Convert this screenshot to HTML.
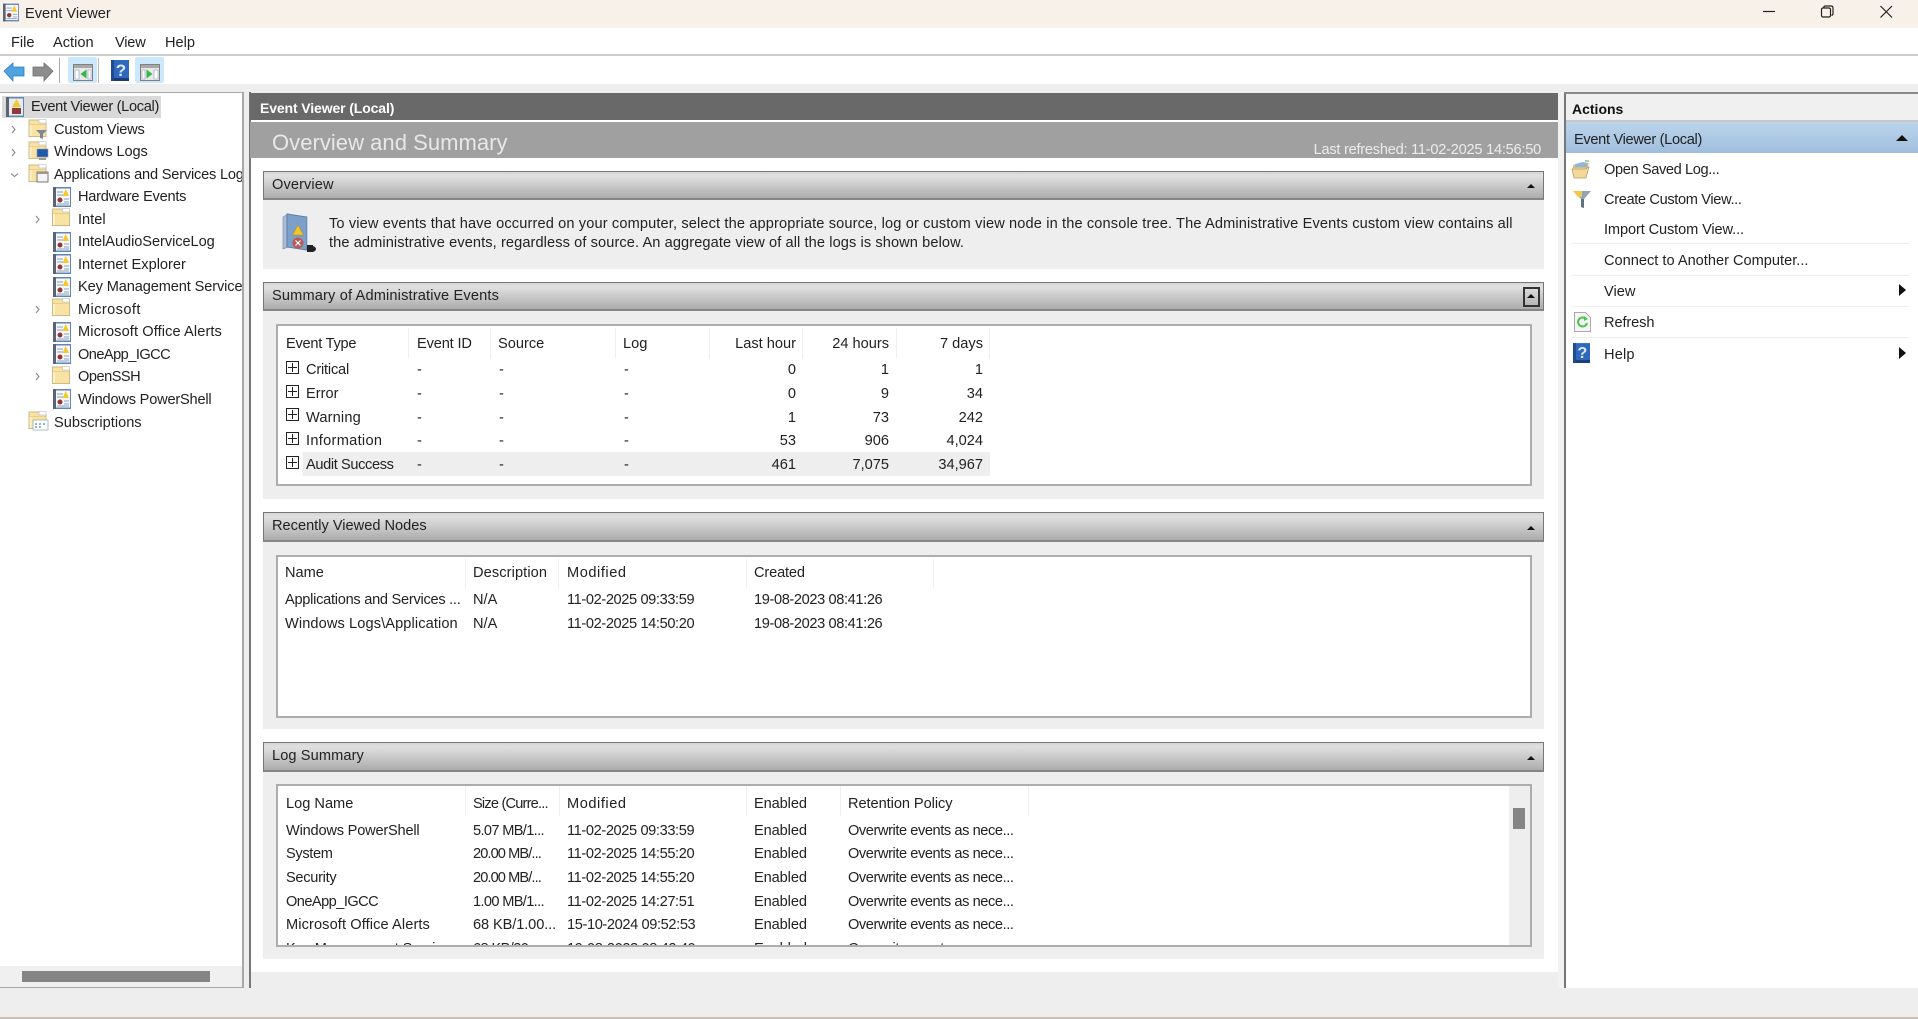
<!DOCTYPE html>
<html><head><meta charset="utf-8"><title>Event Viewer</title>
<style>
html,body{margin:0;padding:0;width:1918px;height:1019px;overflow:hidden;background:#eee;font-family:"Liberation Sans",sans-serif;font-size:14.6px;color:#222}
.a{position:absolute}
.t{position:absolute;line-height:20px;height:20px;white-space:nowrap;margin-top:1px}
.r{text-align:right}
.d{letter-spacing:-.38px}
.o{letter-spacing:-.42px}
.sh{position:absolute;left:263px;width:1279px;box-sizing:content-box;border:1px solid #777;border-bottom:2px solid #858585;background:linear-gradient(#d6d6d6,#e0e0e0 14%,#acacac)}
.sb{position:absolute;left:263px;width:1281px;background:#eee}
.lb{position:absolute;left:276px;width:1252px;border:2px solid #adadad;background:#fff;box-sizing:content-box}
.sep{position:absolute;width:1px;background:#f0f0f0}
.h{position:absolute;left:1572px;width:337px;height:1px;background:#eee}
.tri{position:absolute;width:0;height:0;border-left:4px solid transparent;border-right:4px solid transparent;border-bottom:4px solid #111}
.ar{position:absolute;width:0;height:0;border-top:6px solid transparent;border-bottom:6px solid transparent;border-left:7px solid #111}
svg.i{position:absolute;overflow:visible}
.pb{position:absolute;left:286px;width:11px;height:11px;border:1.5px solid #222;background:#fff}
.pb:before{content:"";position:absolute;left:1px;right:1px;top:5px;height:1px;background:#222}
.pb:after{content:"";position:absolute;top:1px;bottom:1px;left:5px;width:1px;background:#222}
</style></head><body>
<svg width="0" height="0" style="position:absolute"><defs>
<symbol id="log" viewBox="0 0 18 20"><rect x="0" y="0" width="18" height="20" fill="#5f86b8"/><rect x="0" y="0" width="3" height="20" fill="#5a6475"/><rect x="3" y="1.500" width="14" height="17" fill="#f7f7f7"/><path d="M4 5h6M4 8h6M11 12h5M11 15h5M4 17h12" stroke="#86a2c6" stroke-width="1"/><path d="M9.500 9l3.200-7 3.300 7z" fill="#f4c92e"/><circle cx="7" cy="13" r="2.500" fill="#8f3a36"/></symbol>
<symbol id="fol" viewBox="0 0 18 18"><path d="M.5 1h10l1 1.500h6v15H.5z" fill="#f8e3a4" stroke="#cfb987"/><rect x="10.500" y=".5" width="7" height="3.500" fill="#fff" stroke="#bfc6cf" stroke-width=".7"/><path d="M1 5h16v.8H1z" fill="#e9c97f"/><path d="M1 6h2v11H1z" fill="#fdf1c9"/></symbol>
<symbol id="help" viewBox="0 0 18 21"><rect width="18" height="21" fill="#2f69bd"/><rect width="18" height="3" y="18" fill="#1c3c78"/><rect x="0" width="3" height="21" fill="#1f4a8f"/><text x="10" y="16" text-anchor="middle" font-family="Liberation Sans,sans-serif" font-weight="700" font-size="17" fill="#dfe6f2">?</text></symbol>
<symbol id="pane" viewBox="0 0 20 17"><rect x=".5" y=".5" width="19" height="16" fill="#e9e9e9" stroke="#808080"/><rect x="1" y="1" width="18" height="3" fill="#a8a8a8"/></symbol>
</defs></svg>

<!-- title bar -->
<div class="a" style="left:0;top:0;width:1918px;height:28px;background:#f8f1e9"></div>
<svg class="i" style="left:3px;top:3px" width="16" height="19"><use href="#log" width="16" height="19"/></svg>
<div class="t" style="left:25px;top:3px">Event Viewer</div>
<svg class="i" style="left:1760px;top:4px" width="140" height="16" fill="none" stroke="#222" stroke-width="1.2"><path d="M3 7.500h12"/><rect x="61.500" y="4" width="9" height="9" rx="1.500"/><path d="M63.500 3.500q.5-1.500 2-1.500h5.500q2 0 2 2v5.500q0 1.500-1.500 2"/><path d="M120.500 2l11.500 11.500M132 2l-11.500 11.500"/></svg>

<!-- menu -->
<div class="a" style="left:0;top:28px;width:1918px;height:27px;background:#fff"></div>
<div class="a" style="left:0;top:54px;width:1918px;height:2px;background:#cfcfcf"></div>
<div class="t" style="left:11px;top:32px">File</div>
<div class="t" style="left:53px;top:32px">Action</div>
<div class="t" style="left:115px;top:32px;letter-spacing:-.2px">View</div>
<div class="t" style="left:165px;top:32px">Help</div>

<!-- toolbar -->
<div class="a" style="left:0;top:56px;width:1918px;height:28px;background:#fff"></div>
<svg class="i" style="left:4px;top:62px" width="52" height="20"><path d="M0 9l9-8v4h11v9H9v5z" fill="#4ea3e0" stroke="#2f7fc0" stroke-width=".8"/><path d="M49 9l-9-8v4H29v9h11v5z" fill="#8c8c8c" stroke="#6f6f6f" stroke-width=".8"/></svg>
<div class="a" style="left:59px;top:58px;width:1px;height:25px;background:#aaa"></div>
<div class="a" style="left:68px;top:57px;width:29px;height:26px;background:#cce8ff;border-radius:2px"></div>
<div class="a" style="left:98px;top:58px;width:1px;height:25px;background:#bbb"></div>
<div class="a" style="left:135px;top:57px;width:29px;height:26px;background:#cce8ff;border-radius:2px"></div>
<svg class="i" style="left:73px;top:64px" width="20" height="17"><use href="#pane" width="20" height="17"/><path d="M2 6h4v9H2z" fill="#fff" stroke="#8ba0b8" stroke-width=".6"/><path d="M15 6h3v9h-3z" fill="#fff" stroke="#8ba0b8" stroke-width=".6"/><path d="M13.500 5.500l-6 4.500 6 4.500z" fill="#3ab54a"/></svg>
<svg class="i" style="left:111px;top:60px" width="18" height="21"><use href="#help" width="18" height="21"/></svg>
<svg class="i" style="left:140px;top:64px" width="20" height="17"><use href="#pane" width="20" height="17"/><path d="M2 6h3v9H2z" fill="#fff" stroke="#8ba0b8" stroke-width=".6"/><path d="M14 6h4v9h-4z" fill="#fff" stroke="#8ba0b8" stroke-width=".6"/><path d="M6.500 5.500l6 4.500-6 4.500z" fill="#3ab54a"/></svg>

<!-- tree -->
<div class="a" style="left:0;top:92px;width:242px;height:895px;background:#fff;border:1px solid #a8a8a8;border-left:0;overflow:hidden">
<div class="a" style="left:2px;top:3px;width:159px;height:22px;background:#d9d9d9"></div>
</div>
<div class="a" style="left:243px;top:92px;width:1px;height:896px;background:#a8a8a8"></div>
<div class="a" style="left:0;top:966px;width:242px;height:21px;background:#f0f0f0"></div>
<div class="a" style="left:22px;top:971px;width:188px;height:11px;background:#858585"></div>
<div class="a" style="left:0;top:92px;width:242px;height:440px;overflow:hidden">
<div class="t" style="left:31px;top:4px;letter-spacing:-.32px">Event Viewer (Local)</div>
<div class="t" style="left:54px;top:27px;letter-spacing:-.2px">Custom Views</div>
<div class="t" style="left:54px;top:49px;letter-spacing:-.1px">Windows Logs</div>
<div class="t" style="left:54px;top:72px;letter-spacing:-.2px">Applications and Services Logs</div>
<div class="t" style="left:78px;top:94px;letter-spacing:-.25px">Hardware Events</div>
<div class="t" style="left:78px;top:117px">Intel</div>
<div class="t" style="left:78px;top:139px;letter-spacing:-.06px">IntelAudioServiceLog</div>
<div class="t" style="left:78px;top:162px">Internet Explorer</div>
<div class="t" style="left:78px;top:184px;letter-spacing:-.12px">Key Management Service</div>
<div class="t" style="left:78px;top:207px;letter-spacing:.4px">Microsoft</div>
<div class="t" style="left:78px;top:229px;letter-spacing:.1px">Microsoft Office Alerts</div>
<div class="t" style="left:78px;top:252px;letter-spacing:-.55px">OneApp_IGCC</div>
<div class="t" style="left:78px;top:274px;letter-spacing:-.5px">OpenSSH</div>
<div class="t" style="left:78px;top:297px;letter-spacing:-.2px">Windows PowerShell</div>
<div class="t" style="left:54px;top:320px">Subscriptions</div>
</div>
<svg class="i" style="left:6px;top:97px" width="18" height="20"><rect x="0" y="0" width="18" height="20" fill="#5f86b8"/><rect x="0" y="0" width="3" height="20" fill="#5a6475"/><rect x="3" y="1.500" width="14" height="17" fill="#e8ecf0"/><path d="M6 10l4.500-8 4.500 8z" fill="#f4c92e"/><rect x="6" y="11" width="9" height="6" fill="#8f3a36"/></svg>
<svg class="i" style="left:28px;top:119px" width="20" height="20"><use href="#fol" width="19" height="18"/><path d="M8 11h11l-4 4v5l-3-1v-4z" fill="#7e8a9a"/></svg>
<svg class="i" style="left:28px;top:141px" width="20" height="20"><use href="#fol" width="19" height="18"/><rect x="9" y="8" width="11" height="8" fill="#1e5aa8" stroke="#99a" stroke-width=".6"/><rect x="11" y="17" width="7" height="2" fill="#999"/></svg>
<svg class="i" style="left:28px;top:164px" width="20" height="20"><use href="#fol" width="19" height="18"/><rect x="9" y="8" width="11" height="10" fill="#f4f4f4" stroke="#777"/><rect x="9" y="8" width="11" height="2" fill="#999"/></svg>
<svg class="i" style="left:53px;top:187px" width="18" height="20"><use href="#log" width="18" height="20"/></svg>
<svg class="i" style="left:52px;top:208px" width="18" height="18"><use href="#fol" width="18" height="18"/></svg>
<svg class="i" style="left:53px;top:232px" width="18" height="20"><use href="#log" width="18" height="20"/></svg>
<svg class="i" style="left:53px;top:254px" width="18" height="20"><use href="#log" width="18" height="20"/></svg>
<svg class="i" style="left:53px;top:277px" width="18" height="20"><use href="#log" width="18" height="20"/></svg>
<svg class="i" style="left:52px;top:298px" width="18" height="18"><use href="#fol" width="18" height="18"/></svg>
<svg class="i" style="left:53px;top:322px" width="18" height="20"><use href="#log" width="18" height="20"/></svg>
<svg class="i" style="left:53px;top:344px" width="18" height="20"><use href="#log" width="18" height="20"/></svg>
<svg class="i" style="left:52px;top:366px" width="18" height="18"><use href="#fol" width="18" height="18"/></svg>
<svg class="i" style="left:53px;top:389px" width="18" height="20"><use href="#log" width="18" height="20"/></svg>
<svg class="i" style="left:28px;top:411px" width="20" height="20"><use href="#fol" width="19" height="18"/><rect x="5" y="9" width="15" height="10" fill="#fff" stroke="#8aa" stroke-width=".7"/><path d="M7 13h2M11 13h2M15 13h2M7 16h2M11 16h2" stroke="#2a6fb0"/></svg>
<svg class="i" style="left:0;top:120px" width="50" height="300" fill="none" stroke="#888" stroke-width="1.100"><path d="M12 6l3 3.500-3 3.500M12 29l3 3.500-3 3.500M11 53.500l3.500 3 3.500-3"/><path d="M36 96l3 3.500-3 3.500M36 186l3 3.500-3 3.500M36 253l3 3.500-3 3.500"/></svg>

<!-- center -->
<div class="a" style="left:249px;top:92px;width:2px;height:896px;background:#777"></div>
<div class="a" style="left:251px;top:93px;width:1307px;height:879px;background:#fff"></div>
<div class="a" style="left:251px;top:972px;width:1307px;height:15px;background:#eee"></div>
<div class="a" style="left:250px;top:93px;width:1308px;height:27px;background:#696969"></div>
<div class="t" style="left:260px;top:97px;color:#fff;font-weight:700;font-size:14px;letter-spacing:-.12px">Event Viewer (Local)</div>
<div class="a" style="left:250px;top:122px;width:1308px;height:36px;background:#a0a0a0"></div>
<div class="t" style="left:272px;top:132px;color:#e8e8e8;font-size:22px;letter-spacing:.04px">Overview and Summary</div>
<div class="t r" style="right:377px;top:139px;color:#ececec;letter-spacing:-.24px">Last refreshed: 11-02-2025 14:56:50</div>

<!-- overview -->
<div class="sh" style="top:171px;height:26px"></div>
<div class="t" style="left:272px;top:174px;letter-spacing:.1px">Overview</div>
<div class="tri" style="left:1527px;top:184px"></div>
<div class="sb" style="top:200px;height:69px"></div>
<svg class="i" style="left:281px;top:214px" width="36" height="40"><path d="M2 3l5-3v33l-5 2z" fill="#a9bdd6" stroke="#7f93ad" stroke-width=".7"/><path d="M6 0l20 3v33L6 33z" fill="#7da0cb" stroke="#5d7ca6"/><path d="M26 3l1 .5v33l-1-.5z" fill="#c5d2e2"/><path d="M17 11l5.500 10h-11z" fill="#f2c52e" stroke="#a80" stroke-width=".5"/><circle cx="17" cy="29" r="5.500" fill="#b85a55"/><path d="M14.500 26.500l5 5M19.500 26.500l-5 5" stroke="#fff" stroke-width="1.200"/><rect x="26" y="31" width="6" height="7" fill="#222"/><ellipse cx="31" cy="35" rx="4" ry="3" fill="#222"/></svg>
<div class="t" style="left:329px;top:213px;letter-spacing:.13px">To view events that have occurred on your computer, select the appropriate source, log or custom view node in the console tree. The Administrative Events custom view contains all</div>
<div class="t" style="left:329px;top:232px;letter-spacing:.09px">the administrative events, regardless of source. An aggregate view of all the logs is shown below.</div>

<!-- summary -->
<div class="sh" style="top:282px;height:26px"></div>
<div class="t" style="left:272px;top:285px;letter-spacing:.15px">Summary of Administrative Events</div>
<div class="a" style="left:1523px;top:287px;width:13px;height:16px;border:2px solid #333"></div>
<div class="tri" style="left:1527px;top:294px"></div>
<div class="sb" style="top:311px;height:188px"></div>
<div class="lb" style="top:324px;height:158px"></div>
<div class="a" style="left:303px;top:452px;width:687px;height:24px;background:#eee"></div>
<div class="sep" style="left:408px;top:328px;height:30px"></div><div class="sep" style="left:490px;top:328px;height:30px"></div><div class="sep" style="left:615px;top:328px;height:30px"></div><div class="sep" style="left:709px;top:328px;height:30px"></div><div class="sep" style="left:802px;top:328px;height:30px"></div><div class="sep" style="left:896px;top:328px;height:30px"></div><div class="sep" style="left:989px;top:328px;height:30px"></div>
<div class="t" style="left:286px;top:333px;letter-spacing:-.25px">Event Type</div><div class="t" style="left:417px;top:333px;letter-spacing:-.15px">Event ID</div><div class="t" style="left:498px;top:333px">Source</div><div class="t" style="left:623px;top:333px">Log</div><div class="t r" style="right:1122px;top:333px">Last hour</div><div class="t r" style="right:1029px;top:333px">24 hours</div><div class="t r" style="right:935px;top:333px">7 days</div>
<div class="pb" style="top:361px"></div><div class="t" style="left:306px;top:359px;letter-spacing:-.2px">Critical</div><div class="t" style="left:417px;top:359px">-</div><div class="t" style="left:499px;top:359px">-</div><div class="t" style="left:624px;top:359px">-</div><div class="t r" style="right:1122px;top:359px">0</div><div class="t r" style="right:1029px;top:359px">1</div><div class="t r" style="right:935px;top:359px">1</div>
<div class="pb" style="top:385px"></div><div class="t" style="left:306px;top:383px">Error</div><div class="t" style="left:417px;top:383px">-</div><div class="t" style="left:499px;top:383px">-</div><div class="t" style="left:624px;top:383px">-</div><div class="t r" style="right:1122px;top:383px">0</div><div class="t r" style="right:1029px;top:383px">9</div><div class="t r" style="right:935px;top:383px">34</div>
<div class="pb" style="top:408px"></div><div class="t" style="left:306px;top:407px;letter-spacing:.15px">Warning</div><div class="t" style="left:417px;top:407px">-</div><div class="t" style="left:499px;top:407px">-</div><div class="t" style="left:624px;top:407px">-</div><div class="t r" style="right:1122px;top:407px">1</div><div class="t r" style="right:1029px;top:407px">73</div><div class="t r" style="right:935px;top:407px">242</div>
<div class="pb" style="top:432px"></div><div class="t" style="left:306px;top:430px;letter-spacing:.3px">Information</div><div class="t" style="left:417px;top:430px">-</div><div class="t" style="left:499px;top:430px">-</div><div class="t" style="left:624px;top:430px">-</div><div class="t r" style="right:1122px;top:430px">53</div><div class="t r" style="right:1029px;top:430px">906</div><div class="t r" style="right:935px;top:430px">4,024</div>
<div class="pb" style="top:456px"></div><div class="t" style="left:306px;top:454px;letter-spacing:-.38px">Audit Success</div><div class="t" style="left:417px;top:454px">-</div><div class="t" style="left:499px;top:454px">-</div><div class="t" style="left:624px;top:454px">-</div><div class="t r" style="right:1122px;top:454px">461</div><div class="t r" style="right:1029px;top:454px">7,075</div><div class="t r" style="right:935px;top:454px">34,967</div>

<!-- recent -->
<div class="sh" style="top:512px;height:27px"></div>
<div class="t" style="left:272px;top:515px">Recently Viewed Nodes</div>
<div class="tri" style="left:1527px;top:526px"></div>
<div class="sb" style="top:542px;height:187px"></div>
<div class="lb" style="top:555px;height:159px"></div>
<div class="sep" style="left:465px;top:559px;height:30px"></div><div class="sep" style="left:558px;top:559px;height:30px"></div><div class="sep" style="left:746px;top:559px;height:30px"></div><div class="sep" style="left:933px;top:559px;height:30px"></div>
<div class="t" style="left:285px;top:562px">Name</div><div class="t" style="left:473px;top:562px;letter-spacing:.1px">Description</div><div class="t" style="left:567px;top:562px;letter-spacing:.55px">Modified</div><div class="t" style="left:754px;top:562px;letter-spacing:-.15px">Created</div>
<div class="t" style="left:285px;top:589px;letter-spacing:-.27px">Applications and Services ...</div><div class="t" style="left:473px;top:589px">N/A</div><div class="t d" style="left:567px;top:589px">11-02-2025 09:33:59</div><div class="t d" style="left:754px;top:589px">19-08-2023 08:41:26</div>
<div class="t" style="left:285px;top:613px;letter-spacing:.1px">Windows Logs\Application</div><div class="t" style="left:473px;top:613px">N/A</div><div class="t d" style="left:567px;top:613px">11-02-2025 14:50:20</div><div class="t d" style="left:754px;top:613px">19-08-2023 08:41:26</div>

<!-- log summary -->
<div class="sh" style="top:742px;height:27px"></div>
<div class="t" style="left:272px;top:745px;letter-spacing:.1px">Log Summary</div>
<div class="tri" style="left:1527px;top:756px"></div>
<div class="sb" style="top:772px;height:187px"></div>
<div class="lb" style="top:784px;height:159px;overflow:hidden"></div>
<div class="a" style="left:278px;top:786px;width:1252px;height:159px;overflow:hidden">
<div class="a" style="left:1231px;top:0;width:21px;height:159px;background:#eee"></div>
<div class="a" style="left:1235px;top:22px;width:12px;height:21px;background:#858585"></div>
<div class="sep" style="left:187px;top:0;height:30px"></div><div class="sep" style="left:281px;top:0;height:30px"></div><div class="sep" style="left:468px;top:0;height:30px"></div><div class="sep" style="left:562px;top:0;height:30px"></div><div class="sep" style="left:750px;top:0;height:30px"></div>
<div class="t" style="left:8px;top:7px">Log Name</div><div class="t" style="left:195px;top:7px;letter-spacing:-.8px">Size (Curre...</div><div class="t" style="left:289px;top:7px;letter-spacing:.55px">Modified</div><div class="t" style="left:476px;top:7px;letter-spacing:-.1px">Enabled</div><div class="t" style="left:570px;top:7px;letter-spacing:-.06px">Retention Policy</div>
<div class="t" style="left:8px;top:34px;letter-spacing:-.2px">Windows PowerShell</div><div class="t" style="left:195px;top:34px;letter-spacing:-.65px">5.07 MB/1...</div><div class="t d" style="left:289px;top:34px">11-02-2025 09:33:59</div><div class="t" style="left:476px;top:34px;letter-spacing:-.1px">Enabled</div><div class="t o" style="left:570px;top:34px">Overwrite events as nece...</div>
<div class="t" style="left:8px;top:57px;letter-spacing:-.35px">System</div><div class="t" style="left:195px;top:57px;letter-spacing:-.9px">20.00 MB/...</div><div class="t d" style="left:289px;top:57px">11-02-2025 14:55:20</div><div class="t" style="left:476px;top:57px;letter-spacing:-.1px">Enabled</div><div class="t o" style="left:570px;top:57px">Overwrite events as nece...</div>
<div class="t" style="left:8px;top:81px;letter-spacing:-.3px">Security</div><div class="t" style="left:195px;top:81px;letter-spacing:-.9px">20.00 MB/...</div><div class="t d" style="left:289px;top:81px">11-02-2025 14:55:20</div><div class="t" style="left:476px;top:81px;letter-spacing:-.1px">Enabled</div><div class="t o" style="left:570px;top:81px">Overwrite events as nece...</div>
<div class="t" style="left:8px;top:105px;letter-spacing:-.55px">OneApp_IGCC</div><div class="t" style="left:195px;top:105px;letter-spacing:-.65px">1.00 MB/1...</div><div class="t d" style="left:289px;top:105px">11-02-2025 14:27:51</div><div class="t" style="left:476px;top:105px;letter-spacing:-.1px">Enabled</div><div class="t o" style="left:570px;top:105px">Overwrite events as nece...</div>
<div class="t" style="left:8px;top:128px;letter-spacing:.1px">Microsoft Office Alerts</div><div class="t" style="left:195px;top:128px;letter-spacing:-.1px">68 KB/1.00...</div><div class="t d" style="left:289px;top:128px">15-10-2024 09:52:53</div><div class="t" style="left:476px;top:128px;letter-spacing:-.1px">Enabled</div><div class="t o" style="left:570px;top:128px">Overwrite events as nece...</div>
<div class="t" style="left:8px;top:152px;letter-spacing:-.12px">Key Management Service</div><div class="t" style="left:195px;top:152px;letter-spacing:-.6px">68 KB/20...</div><div class="t d" style="left:289px;top:152px">19-08-2023 08:42:40</div><div class="t" style="left:476px;top:152px;letter-spacing:-.1px">Enabled</div><div class="t o" style="left:570px;top:152px">Overwrite events as nece...</div>
</div>

<!-- actions -->
<div class="a" style="left:1558px;top:92px;width:6px;height:896px;background:#f2f2f2"></div>
<div class="a" style="left:1564px;top:92px;width:2px;height:896px;background:#777"></div>
<div class="a" style="left:1564px;top:92px;width:354px;height:2px;background:#888"></div>
<div class="a" style="left:1566px;top:94px;width:352px;height:26px;background:#f0f0f0"></div>
<div class="a" style="left:1566px;top:120px;width:352px;height:2px;background:#c8c8c8"></div>
<div class="a" style="left:1566px;top:122px;width:352px;height:866px;background:#fff"></div>
<div class="a" style="left:1566px;top:988px;width:352px;height:1px;background:#ddd"></div>
<div class="t" style="left:1572px;top:98px;font-weight:700;font-size:14px;color:#111">Actions</div>
<div class="a" style="left:1566px;top:122px;width:352px;height:31px;background:linear-gradient(#bcd5ec,#9fbedd)"></div>
<div class="t" style="left:1574px;top:129px;letter-spacing:-.32px">Event Viewer (Local)</div>
<div class="tri" style="left:1896px;top:135px;border-left-width:6px;border-right-width:6px;border-bottom-width:6px"></div>
<div class="t" style="left:1604px;top:159px;letter-spacing:-.38px">Open Saved Log...</div>
<div class="t" style="left:1604px;top:189px;letter-spacing:-.35px">Create Custom View...</div>
<div class="t" style="left:1604px;top:219px;letter-spacing:-.12px">Import Custom View...</div>
<div class="h" style="top:243px"></div>
<div class="t" style="left:1604px;top:250px">Connect to Another Computer...</div>
<div class="h" style="top:275px"></div>
<div class="t" style="left:1604px;top:281px">View</div>
<div class="ar" style="left:1899px;top:284px"></div>
<div class="h" style="top:306px"></div>
<div class="t" style="left:1604px;top:312px;letter-spacing:-.1px">Refresh</div>
<div class="h" style="top:337px"></div>
<div class="t" style="left:1604px;top:344px;letter-spacing:.15px">Help</div>
<div class="ar" style="left:1899px;top:347px"></div>
<svg class="i" style="left:1572px;top:160px" width="18" height="20"><path d="M1 8l1-3h9l1-2h4v5z" fill="#e8c98a" stroke="#b89a5a" stroke-width=".6"/><path d="M3 4l8-2 4 1v4H3z" fill="#8fb7dc"/><path d="M0 9h13l4-2-3 11H2z" fill="#f3d89a" stroke="#b89a5a" stroke-width=".7"/><path d="M13 1h4" stroke="#4caf50"/></svg>
<svg class="i" style="left:1573px;top:190px" width="19" height="19"><path d="M0 1h18l-7 8v9l-3-1v-8z" fill="#93a3b5"/><path d="M0 1h9v6H5z" fill="#f2c94c"/><path d="M8 9h3v9l-3-1z" fill="#5f7080"/></svg>
<svg class="i" style="left:1574px;top:312px" width="17" height="20"><path d="M.5.5h11l5 5v14H.5z" fill="#f4f4f4" stroke="#aaa"/><path d="M12 7a4.500 4.500 0 1 0 1 4" fill="none" stroke="#4cc24c" stroke-width="2"/><path d="M10 4l4 3-4 2z" fill="#4cc24c"/></svg>
<svg class="i" style="left:1573px;top:343px" width="17" height="20"><use href="#help" width="17" height="20"/></svg>

<!-- bottom -->
<div class="a" style="left:0;top:988px;width:1918px;height:29px;background:#eee"></div>
<div class="a" style="left:0;top:987px;width:244px;height:1px;background:#a8a8a8"></div>
<div class="a" style="left:0;top:1017px;width:1918px;height:2px;background:#c9c0b8"></div>
</body></html>
